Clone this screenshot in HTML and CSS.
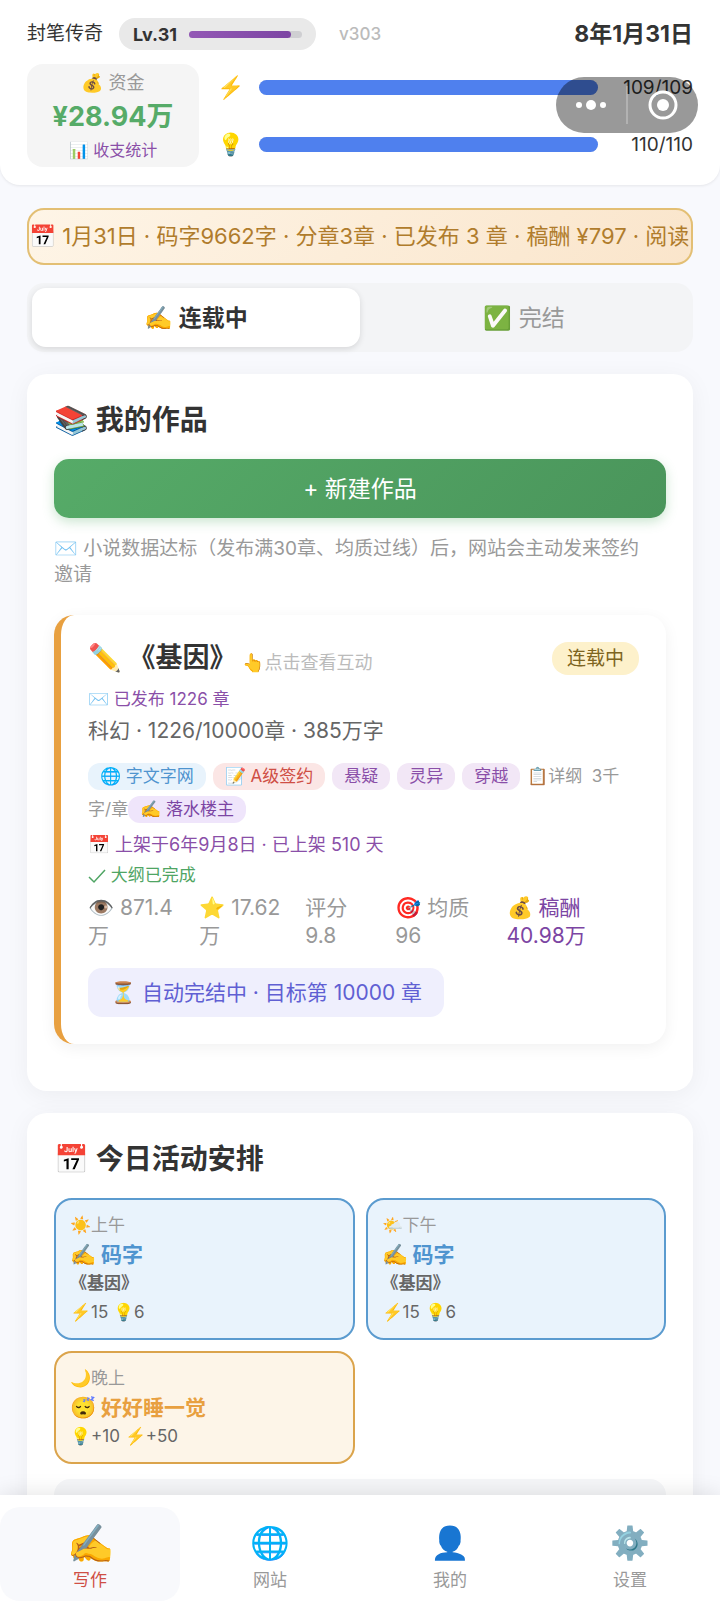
FILE: index.html
```html
<!DOCTYPE html>
<html lang="zh-CN">
<head>
    <meta charset="UTF-8">
    <meta name="viewport" content="width=device-width, initial-scale=1.0">
    <title>封笔传奇</title>
    <link rel="stylesheet" href="styles.css">
</head>
<body>
    <div class="app">
        <header class="header">
            <div class="header-top">
                <span class="rank">封笔传奇</span>
                <div class="level">
                    <b>Lv.31</b>
                    <div class="level-track"><div class="level-fill" style="width: 90%"></div></div>
                </div>
                <span class="version">v303</span>
                <span class="date">8年1月31日</span>
            </div>
            <div class="header-stats">
                <div class="money">
                    <span class="money-label">💰 资金</span>
                    <strong class="money-value">¥28.94万</strong>
                    <a href="#" class="money-link">📊 收支统计</a>
                </div>
                <div class="bars">
                    <div class="bar-row">
                        <span class="bar-icon">⚡</span>
                        <div class="bar"><div class="bar-fill" style="width: 100%"></div></div>
                        <span class="bar-value">109/109</span>
                    </div>
                    <div class="bar-row">
                        <span class="bar-icon">💡</span>
                        <div class="bar"><div class="bar-fill" style="width: 100%"></div></div>
                        <span class="bar-value">110/110</span>
                    </div>
                </div>
            </div>
            <div class="capsule">
                <button type="button" aria-label="更多">
                    <svg width="32" height="12" viewBox="0 0 32 12" fill="#fff">
                        <circle cx="4" cy="6" r="3"/>
                        <circle cx="16" cy="6" r="5"/>
                        <circle cx="28" cy="6" r="3"/>
                    </svg>
                </button>
                <button type="button" aria-label="关闭">
                    <svg width="30" height="30" viewBox="0 0 30 30">
                        <circle cx="15" cy="15" r="13" fill="none" stroke="#fff" stroke-width="3"/>
                        <circle cx="15" cy="15" r="6" fill="#fff"/>
                    </svg>
                </button>
            </div>
        </header>

        <main class="content">
            <div class="notice">📅 1月31日 · 码字9662字 · 分章3章 · 已发布 3 章 · 稿酬 ¥797 · 阅读</div>

            <div class="tabs">
                <button type="button" class="tab active">✍️ 连载中</button>
                <button type="button" class="tab">✅ 完结</button>
            </div>

            <section class="card">
                <h2>📚 我的作品</h2>
                <button type="button" class="btn-new">+ 新建作品</button>
                <p class="hint">✉️ 小说数据达标（发布满30章、均质过线）后，网站会主动发来签约邀请</p>

                <article class="book">
                    <div class="book-head">
                        <h3>✏️ 《基因》</h3>
                        <span class="book-tip">👆点击查看互动</span>
                        <span class="badge">连载中</span>
                    </div>
                    <p class="book-published">✉️ 已发布 1226 章</p>
                    <p class="book-info">科幻 · 1226/10000章 · 385万字</p>
                    <p class="tags"><span class="tag blue">🌐 字文字网</span><span class="tag red">📝 A级签约</span><span class="tag purple">悬疑</span><span class="tag purple">灵异</span><span class="tag purple">穿越</span>📋详纲&nbsp; 3千字/章<span class="tag author">✍️ 落水楼主</span></p>
                    <p class="book-line purple-text">📅 上架于6年9月8日 · 已上架 510 天</p>
                    <p class="book-line green-text">
                        <svg class="check" width="18" height="16" viewBox="0 0 18 16"><path d="M1 9l5 5L17 2" fill="none" stroke="currentColor" stroke-width="1.5"/></svg>
                        大纲已完成
                    </p>
                    <div class="book-stats">
                        <span>👁️ 871.4<br>万</span>
                        <span>⭐ 17.62<br>万</span>
                        <span>评分<br>9.8</span>
                        <span>🎯 均质<br>96</span>
                        <span class="fee">💰 稿酬<br>40.98万</span>
                    </div>
                    <div class="auto-end">⏳ 自动完结中 · 目标第 10000 章</div>
                </article>
            </section>

            <section class="card">
                <h2>📅 今日活动安排</h2>
                <div class="schedule">
                    <div class="slot">
                        <span class="slot-time">☀️上午</span>
                        <b class="slot-name">✍️ 码字</b>
                        <span class="slot-book">《基因》</span>
                        <span class="slot-cost">⚡15 💡6</span>
                    </div>
                    <div class="slot">
                        <span class="slot-time">🌤️下午</span>
                        <b class="slot-name">✍️ 码字</b>
                        <span class="slot-book">《基因》</span>
                        <span class="slot-cost">⚡15 💡6</span>
                    </div>
                    <div class="slot rest">
                        <span class="slot-time">🌙晚上</span>
                        <b class="slot-name">😴 好好睡一觉</b>
                        <span class="slot-cost">💡+10 ⚡+50</span>
                    </div>
                </div>
                <div class="panel"></div>
            </section>
        </main>

        <nav class="nav">
            <a href="#" class="nav-item active"><span class="nav-icon">✍️</span>写作</a>
            <a href="#" class="nav-item"><span class="nav-icon">🌐</span>网站</a>
            <a href="#" class="nav-item"><span class="nav-icon">👤</span>我的</a>
            <a href="#" class="nav-item"><span class="nav-icon">⚙️</span>设置</a>
        </nav>
    </div>
</body>
</html>
```
FILE: styles.css
```css
* {
    box-sizing: border-box;
}

body {
    margin: 0;
    font-family: Inter, "Noto Sans CJK SC", sans-serif;
    font-size: 17px;
    color: #333;
    background-color: #f8f9fd;
}

h2, h3, p {
    margin: 0;
}

button {
    border: none;
    padding: 0 0 4px;
    font-family: inherit;
    cursor: pointer;
}

a {
    color: inherit;
    text-decoration: none;
}

.app {
    height: 100vh;
    display: flex;
    flex-direction: column;
}

/* header */
.header {
    position: relative;
    z-index: 1;
    padding: 17px 27px 18px;
    background-color: #fff;
    border-radius: 0 0 20px 20px;
    box-shadow: 0 1px 3px rgba(0, 0, 0, 0.08);
}

.header-top {
    display: flex;
    align-items: center;
    height: 34px;
}

.rank {
    font-size: 19px;
    line-height: 32px;
}

.level {
    display: flex;
    align-items: center;
    gap: 12px;
    height: 32px;
    margin-left: 16px;
    padding: 0 14px;
    background-color: #e9e9e9;
    border-radius: 16px;
    font-size: 18px;
}

.level-track {
    width: 113px;
    height: 7px;
    background-color: #cfcfd2;
    border-radius: 4px;
}

.level-fill {
    height: 100%;
    border-radius: 4px;
    background: linear-gradient(90deg, #9358b5, #7c45a3);
}

.version {
    margin-left: 23px;
    font-size: 17px;
    font-weight: 500;
    color: #bbb;
}

.date {
    margin-left: auto;
    font-size: 23px;
    font-weight: bold;
    line-height: 32px;
}

.header-stats {
    display: flex;
    gap: 18px;
    margin-top: 13px;
}

.money {
    display: flex;
    flex-direction: column;
    align-items: center;
    justify-content: center;
    width: 172px;
    height: 103px;
    background-color: #f5f5f5;
    border-radius: 16px;
}

.money-label {
    font-size: 18px;
    line-height: 30px;
    color: #999;
}

.money-value {
    font-size: 27px;
    line-height: 38px;
    color: #56ab68;
}

.money-link {
    font-size: 16px;
    line-height: 28px;
    color: #8a4fa8;
}

.bars {
    flex: 1;
    display: flex;
    flex-direction: column;
    justify-content: space-between;
    padding: 8px 0;
}

.bar-row {
    display: flex;
    align-items: center;
    height: 30px;
}

.bar-icon {
    width: 42px;
    font-size: 22px;
}

.bar {
    flex: 1;
    height: 15px;
    background-color: #e9e9e9;
    border-radius: 8px;
}

.bar-fill {
    height: 100%;
    background-color: #4f80ee;
    border-radius: 8px;
}

.bar-value {
    width: 95px;
    text-align: right;
    font-size: 19px;
}

/* mini program capsule, floats over the header */
.capsule {
    position: absolute;
    top: 77px;
    right: 22px;
    display: flex;
    align-items: center;
    width: 142px;
    height: 56px;
    background-color: rgba(0, 0, 0, 0.4);
    border-radius: 28px;
}

.capsule button {
    flex: 1;
    display: flex;
    align-items: center;
    justify-content: center;
    height: 38px;
    padding: 0;
    background: none;
}

.capsule button + button {
    border-left: 2px solid rgba(255, 255, 255, 0.25);
}

/* content */
.content {
    flex: 1;
    min-height: 0;
    overflow-y: auto;
    scrollbar-width: none;
    padding: 23px 27px;
}

.notice {
    height: 57px;
    border: 2px solid #e3bf74;
    border-radius: 17px;
    background: linear-gradient(135deg, #fef5e7, #fae5cb);
    color: #b07c2c;
    font-size: 22px;
    line-height: 53px;
    white-space: nowrap;
    overflow: hidden;
}

.tabs {
    display: flex;
    margin-top: 18px;
    padding: 5px;
    background-color: #f3f4f6;
    border-radius: 17px;
}

.tab {
    flex: 1;
    height: 59px;
    border-radius: 14px;
    background: none;
    font-size: 23px;
    color: #999;
}

.tab.active {
    background-color: #fff;
    box-shadow: 0 2px 6px rgba(0, 0, 0, 0.12);
    color: #333;
    font-weight: bold;
}

.card {
    margin-top: 22px;
    padding: 27px 27px 47px;
    background-color: #fff;
    border-radius: 20px;
    box-shadow: 0 4px 24px rgba(0, 0, 0, 0.05);
}

.card h2 {
    font-size: 28px;
    line-height: 38px;
}

.btn-new {
    width: 100%;
    height: 59px;
    margin-top: 20px;
    border-radius: 15px;
    background: linear-gradient(135deg, #56ab68, #4a955b);
    box-shadow: 0 4px 12px rgba(86, 171, 104, 0.3);
    color: #fff;
    font-size: 23px;
}

.hint {
    margin-top: 18px;
    padding-right: 14px;
    font-size: 19px;
    line-height: 26px;
    color: #999;
}

/* book */
.book {
    margin-top: 27px;
    padding: 26px 27px 27px;
    border-left: 7px solid #e8a040;
    border-radius: 20px;
    box-shadow: 0 4px 16px rgba(0, 0, 0, 0.06);
}

.book-head {
    display: flex;
    align-items: center;
    height: 34px;
}

.book-head h3 {
    font-size: 27px;
    line-height: 34px;
}

.book-tip {
    margin-left: 6px;
    padding-top: 6px;
    font-size: 18px;
    color: #bbb;
}

.badge {
    margin-left: auto;
    padding: 0 15px;
    border-radius: 16px;
    background-color: #fdf1cb;
    color: #7d6420;
    font-size: 19px;
    line-height: 33px;
}

.book-published,
.book-line {
    line-height: 30px;
}

.book-published,
.purple-text {
    color: #8a4fa8;
}

.purple-text {
    font-size: 18px;
}

.green-text {
    color: #4fa564;
}

.check {
    vertical-align: middle;
}

.book-published {
    margin-top: 9px;
}

.book-info {
    font-size: 21px;
    line-height: 34px;
    color: #666;
}

.tags {
    margin: 12px 0 4px;
    line-height: 33px;
    color: #999;
}

.tag {
    display: inline-block;
    margin-right: 7px;
    padding: 0 12px;
    border-radius: 12px;
    line-height: 27px;
}

.tag.blue {
    background-color: #e8f3fc;
    color: #4f94cf;
}

.tag.red {
    background-color: #fbe6e5;
    color: #cf4f45;
}

.tag.purple {
    background-color: #f2e7f6;
    color: #8a4fa8;
}

.tag.author {
    background-color: #efe5fb;
    color: #7c45a3;
}

.book-stats {
    display: grid;
    grid-template-columns: 21fr 20fr 17fr 21fr 25fr;
    margin-top: 4px;
    font-size: 21px;
    line-height: 28px;
    color: #999;
}

.book-stats .fee {
    color: #7c45a3;
}

.auto-end {
    width: fit-content;
    margin-top: 18px;
    padding: 0 22px;
    border-radius: 14px;
    background-color: #efeffd;
    color: #605fd3;
    font-size: 21px;
    line-height: 49px;
}

/* schedule */
.schedule {
    display: grid;
    grid-template-columns: 1fr 1fr;
    gap: 11px;
    margin-top: 20px;
}

.slot {
    display: flex;
    flex-direction: column;
    padding: 11px 14px;
    border: 2px solid #5b9bcf;
    border-radius: 18px;
    background-color: #e9f3fc;
    line-height: 29px;
}

.slot-time {
    color: #999;
}

.slot-name {
    font-size: 21px;
    color: #4f94cf;
}

.slot-book {
    font-weight: bold;
    color: #666;
}

.slot-cost {
    color: #666;
}

.slot.rest {
    border-color: #dba44c;
    background-color: #fdf5e8;
}

.slot.rest .slot-name {
    color: #e8a040;
}

.panel {
    height: 80px;
    margin-top: 15px;
    border-radius: 16px;
    background-color: #f5f6f8;
}

/* bottom nav */
.nav {
    position: relative;
    z-index: 1;
    display: flex;
    height: 106px;
    padding-top: 12px;
    background-color: #fff;
    box-shadow: 0 -2px 20px rgba(0, 0, 0, 0.1);
}

.nav-item {
    flex: 1;
    display: flex;
    flex-direction: column;
    align-items: center;
    padding-top: 12px;
    border-radius: 20px;
    line-height: 26px;
    color: #999;
}

.nav-icon {
    height: 48px;
    font-size: 32px;
    line-height: 48px;
}

.nav-item.active {
    background-color: #f8f9fc;
    color: #cf4f45;
}

.nav-item.active .nav-icon {
    font-size: 38px;
}
```
